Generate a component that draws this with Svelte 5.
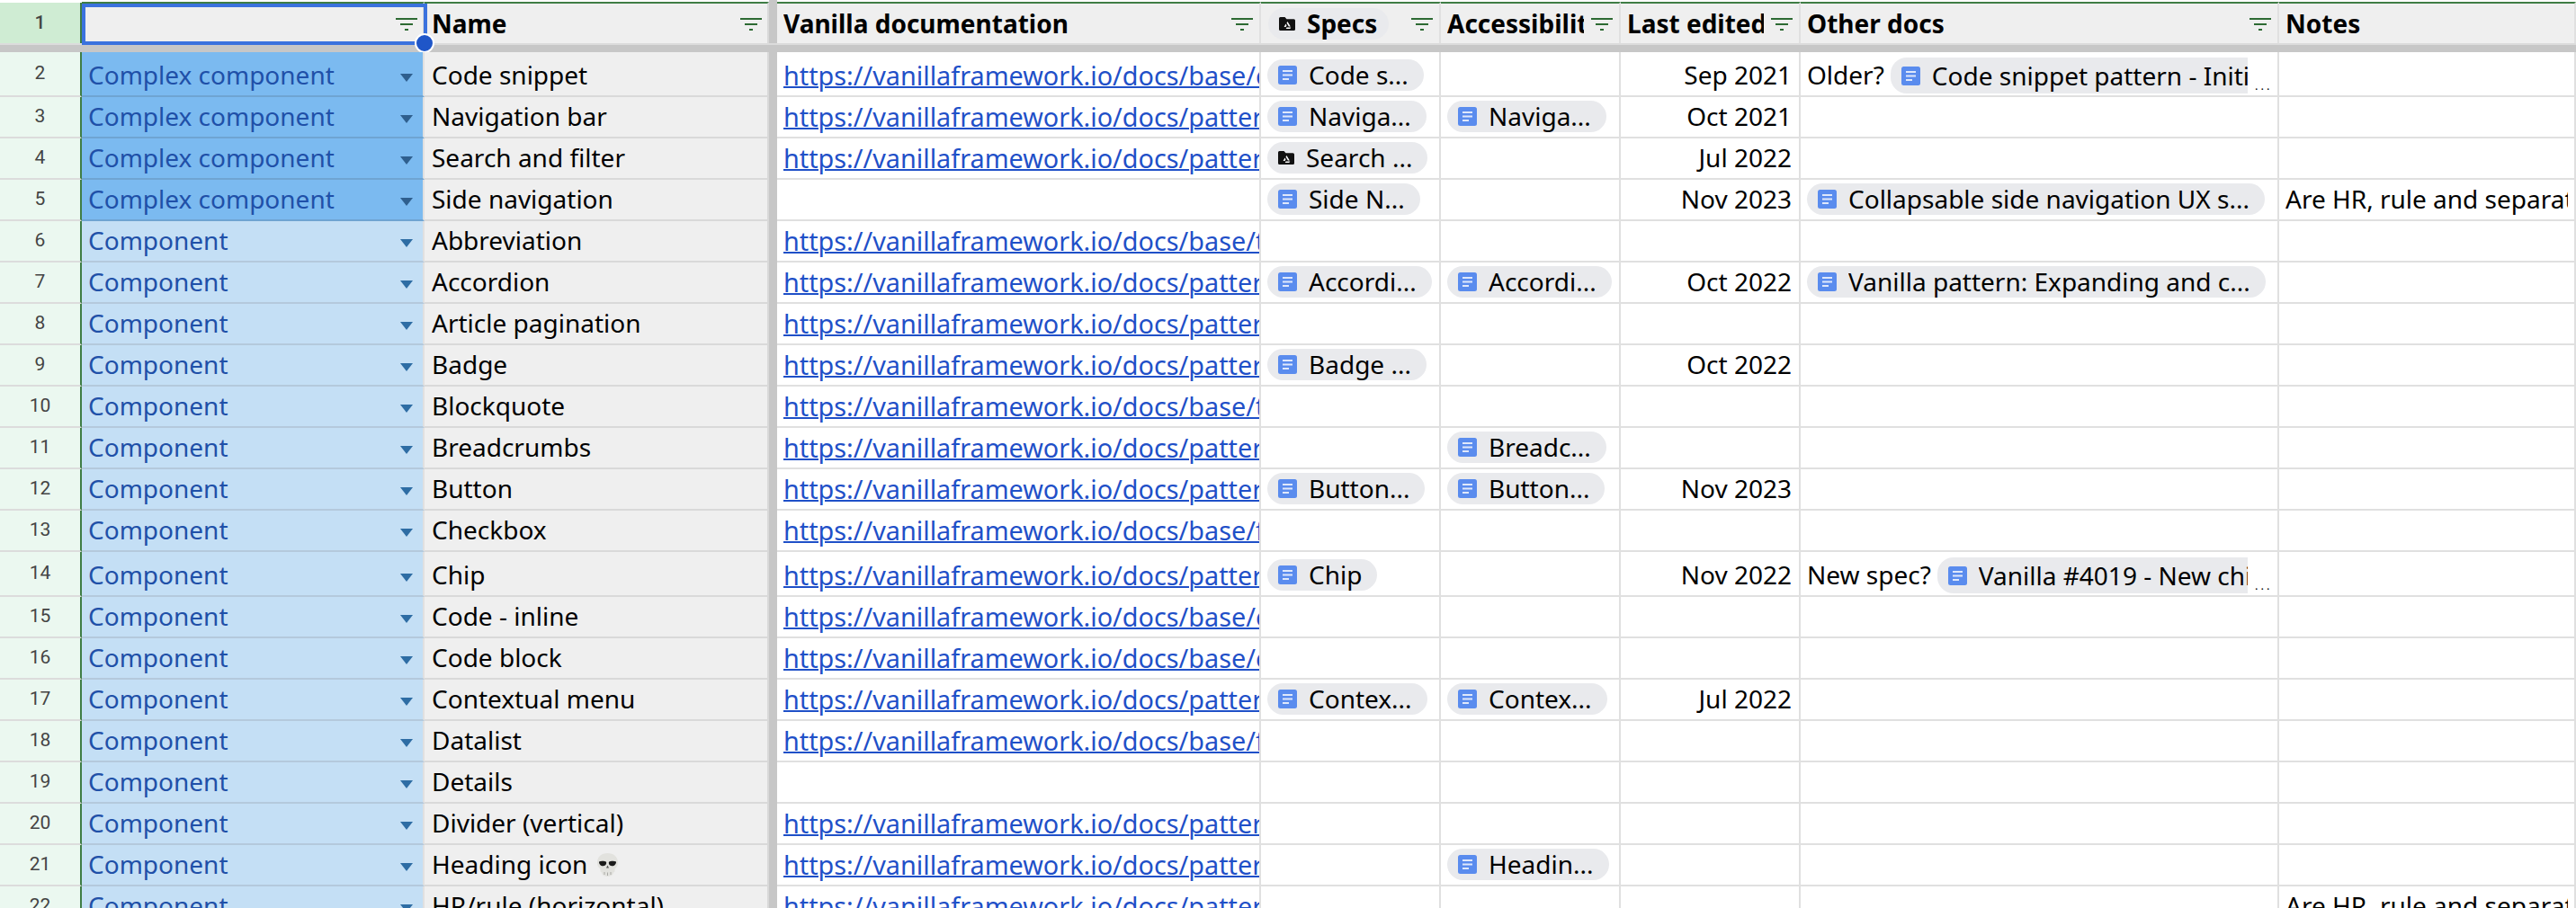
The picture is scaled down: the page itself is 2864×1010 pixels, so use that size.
<script lang="ts">
  const base = 'https://vanillaframework.io/docs/'
  const doc = (text) => ({ kind: 'doc', text })
  const folder = (text) => ({ kind: 'folder', text })

  const complex = 'Complex component'
  const comp = 'Component'

  const rows = [
    { n: 2, type: complex, name: 'Code snippet', link: 'base/code', spec: doc('Code s...'), date: 'Sep 2021', prefix: 'Older?', other: doc('Code snippet pattern - Initial spec'), cut: true, tall: true },
    { n: 3, type: complex, name: 'Navigation bar', link: 'patterns/navigation', spec: doc('Naviga...'), a11y: doc('Naviga...'), date: 'Oct 2021' },
    { n: 4, type: complex, name: 'Search and filter', link: 'patterns/search-and-filter', spec: folder('Search ...'), date: 'Jul 2022' },
    { n: 5, type: complex, name: 'Side navigation', spec: doc('Side N...'), date: 'Nov 2023', other: doc('Collapsable side navigation UX s...'), notes: 'Are HR, rule and separator the same thing?' },
    { n: 6, type: comp, name: 'Abbreviation', link: 'base/typography' },
    { n: 7, type: comp, name: 'Accordion', link: 'patterns/accordion', spec: doc('Accordi...'), a11y: doc('Accordi...'), date: 'Oct 2022', other: doc('Vanilla pattern: Expanding and c...') },
    { n: 8, type: comp, name: 'Article pagination', link: 'patterns/article-pagination' },
    { n: 9, type: comp, name: 'Badge', link: 'patterns/badge', spec: doc('Badge ...'), date: 'Oct 2022' },
    { n: 10, type: comp, name: 'Blockquote', link: 'base/typography' },
    { n: 11, type: comp, name: 'Breadcrumbs', link: 'patterns/breadcrumbs', a11y: doc('Breadc...') },
    { n: 12, type: comp, name: 'Button', link: 'patterns/buttons', spec: doc('Button...'), a11y: doc('Button...'), date: 'Nov 2023' },
    { n: 13, type: comp, name: 'Checkbox', link: 'base/forms' },
    { n: 14, type: comp, name: 'Chip', link: 'patterns/chip', spec: doc('Chip'), date: 'Nov 2022', prefix: 'New spec?', other: doc('Vanilla #4019 - New chip spec'), cut: true, tall: true },
    { n: 15, type: comp, name: 'Code - inline', link: 'base/code' },
    { n: 16, type: comp, name: 'Code block', link: 'base/code' },
    { n: 17, type: comp, name: 'Contextual menu', link: 'patterns/contextual-menu', spec: doc('Contex...'), a11y: doc('Contex...'), date: 'Jul 2022' },
    { n: 18, type: comp, name: 'Datalist', link: 'base/forms' },
    { n: 19, type: comp, name: 'Details' },
    { n: 20, type: comp, name: 'Divider (vertical)', link: 'patterns/divider' },
    { n: 21, type: comp, name: 'Heading icon', skull: true, link: 'patterns/heading-icon', a11y: doc('Headin...') },
    { n: 22, type: comp, name: 'HR/rule (horizontal)', link: 'patterns/rule', notes: 'Are HR, rule and separator the same thing?' }
  ]
</script>

{#snippet filterIcon()}
  <svg class="filter" viewBox="0 0 24 14" aria-hidden="true">
    <path d="M0 1h24M5 7h14M10 13h4" stroke="#2d6a33" stroke-width="2" fill="none" />
  </svg>
{/snippet}

{#snippet chipIcon(kind)}
  {#if kind === 'doc'}
    <svg class="icon" viewBox="0 0 21 21" aria-hidden="true">
      <rect width="21" height="21" rx="2.5" fill="#5a8cee" />
      <path d="M5 6h11M5 10.5h11M5 15h7" stroke="#dfe8fb" stroke-width="2" fill="none" />
    </svg>
  {:else}
    <svg class="icon folder" viewBox="0 0 18 15" aria-hidden="true">
      <path d="M1.5 0h5l2 2.2h8a1.5 1.5 0 0 1 1.5 1.5v9.800a1.5 1.5 0 0 1-1.500 1.500h-15a1.500 1.500 0 0 1-1.500-1.500v-12a1.500 1.500 0 0 1 1.500-1.500z" fill="#111" />
      <path d="M9.500 5l3.300 5.500h-1.900l-2.400-4zM7.500 7.600l1 1.700-1 1.700h-1.900zM8.600 11.500h4.700l-1 1.500h-4.600z" fill="#fff" />
    </svg>
  {/if}
{/snippet}

{#snippet chip(c, cut = false)}
  <span class="chip" class:cut>
    {@render chipIcon(c.kind)}
    <span class="chip-text">{c.text}</span>
  </span>
  {#if cut}<span class="more">...</span>{/if}
{/snippet}

<div class="sheet">
  <div class="row head">
    <div class="rownum first">1</div>
    <div class="cell hcell name-col active">{@render filterIcon()}</div>
    <div class="cell hcell name-col"><span class="label">Name</span>{@render filterIcon()}</div>
    <div class="freeze"></div>
    <div class="cell hcell"><span class="label">Vanilla documentation</span>{@render filterIcon()}</div>
    <div class="cell hcell">
      <span class="chip head-chip">{@render chipIcon('folder')}<span class="chip-text">Specs</span></span>
      {@render filterIcon()}
    </div>
    <div class="cell hcell"><span class="label">Accessibility</span>{@render filterIcon()}</div>
    <div class="cell hcell"><span class="label">Last edited</span>{@render filterIcon()}</div>
    <div class="cell hcell"><span class="label">Other docs</span>{@render filterIcon()}</div>
    <div class="cell hcell"><span class="label">Notes</span></div>
    <div class="selection"><span class="handle"></span></div>
  </div>
  <div class="bar"></div>

  {#each rows as r}
    <div class="row" class:tall={r.tall}>
      <div class="rownum">{r.n}</div>
      <div class="cell type" class:complex={r.type === complex}>
        <span class="label">{r.type}</span>
        <span class="arrow"></span>
      </div>
      <div class="cell name-col">
        <span class="label">{r.name}</span>
        {#if r.skull}
          <svg class="skull" viewBox="0 0 23 26" aria-hidden="true">
            <path d="M11.500 0C18 0 23 4 23 10.500c0 3.300-1.300 5.600-3.500 7V20c0 .8-.6 1.300-1.400 1.300-.2 2.800-3 4.700-6.600 4.700s-6.400-1.900-6.600-4.700C4.100 21.300 3.500 20.800 3.500 20v-2.500C1.300 16.100 0 13.800 0 10.500 0 4 5 0 11.500 0z" fill="#e2e2de" />
            <path d="M2 9.500c2-1 6-1 8 .3.600 1.900-.6 4.400-3.300 4.500-3 .1-4.900-2.400-4.700-4.800zM21 9.500c-2-1-6-1-8 .3-.6 1.900.6 4.400 3.300 4.500 3 .1 4.900-2.400 4.700-4.800z" fill="#1c1c1c" />
            <path d="M11.500 13.500l1.500 3h-3z" fill="#555" />
            <path d="M8 21v3M11.500 21.500V25M15 21v3" stroke="#a9a9a5" stroke-width="1" fill="none" />
          </svg>
        {/if}
      </div>
      <div class="freeze"></div>
      <div class="cell">
        {#if r.link}<a class="link" href={base + r.link}>{base + r.link}</a>{/if}
      </div>
      <div class="cell">{#if r.spec}{@render chip(r.spec)}{/if}</div>
      <div class="cell">{#if r.a11y}{@render chip(r.a11y)}{/if}</div>
      <div class="cell date">{r.date ?? ''}</div>
      <div class="cell">
        {#if r.prefix}<span class="prefix">{r.prefix}</span>{/if}
        {#if r.other}{@render chip(r.other, r.cut)}{/if}
      </div>
      <div class="cell"><span class="label">{r.notes ?? ''}</span></div>
    </div>
  {/each}
</div>

<style>
  :global(body) {
    margin: 0;
    background: #fff;
  }

  .sheet {
    height: 1010px;
    overflow: hidden;
    font-family: 'Noto Sans', sans-serif;
    font-size: 28px;
    color: #000;
  }

  .row {
    position: relative;
    display: grid;
    grid-template-columns: 91px 381px 383px 9px 538px 200px 200px 200px 532px 1fr;
    height: 46px;
  }

  .row.tall {
    height: 50px;
  }

  .cell {
    display: flex;
    align-items: flex-end;
    min-width: 0;
    box-sizing: border-box;
    padding: 0 7px 5px 7px;
    border-right: 2px solid #e0e0e0;
    border-bottom: 2px solid #e0e0e0;
    overflow: hidden;
    white-space: nowrap;
    line-height: 35px;
  }

  .label {
    overflow: hidden;
  }

  .rownum {
    display: flex;
    align-items: center;
    justify-content: center;
    box-sizing: border-box;
    padding-bottom: 2px;
    background: #ebf8f0;
    border-right: 2px solid #3f7d45;
    border-bottom: 2px solid #dcdcdc;
    color: #444;
    font-family: Roboto, sans-serif;
    font-size: 21px;
  }

  .rownum.first {
    margin-top: 3px;
    background: #cfecd3;
    border-bottom: 0;
    font-weight: 500;
  }

  .freeze {
    background: #c7c7c7;
  }

  .head {
    height: 48px;
  }

  .hcell {
    align-items: center;
    justify-content: space-between;
    gap: 8px;
    padding: 0 7px 0 7px;
    margin-top: 2px;
    border-top: 2px solid #3f7d45;
    border-bottom: 0;
    background: #efefef;
    font-weight: 700;
  }

  .head .label {
    flex: 1;
  }

  .bar {
    height: 10px;
    background: #c7c7c7;
    border-top: 2px solid #dcdcdc;
    box-sizing: border-box;
  }

  .filter {
    flex: none;
    width: 24px;
    height: 14px;
    margin-top: 2px;
  }

  .name-col {
    padding-left: 8px;
    background: #efefef;
    border-right-color: #d9d9d9;
    border-bottom-color: #d9d9d9;
  }

  .hcell.name-col {
    padding-right: 6px;
  }

  .active {
    justify-content: flex-end;
  }

  .type {
    justify-content: space-between;
    padding-right: 11px;
    background: #c4dff5;
    color: #1f50a8;
    border-bottom-color: #b4c9dc;
  }

  .type.complex {
    background: #7bbaf0;
    border-bottom-color: #6fa4d2;
  }

  .arrow {
    flex: none;
    width: 0;
    height: 0;
    margin: 0 0 10px 0;
    border: 7px solid transparent;
    border-top: 9px solid #2e6da4;
    border-bottom: 0;
  }

  .complex .arrow {
    border-top-color: #2f5f8e;
  }

  .link {
    color: #1f50c8;
    font-size: 28.8px;
    text-decoration: underline;
    text-decoration-thickness: 2px;
  }

  .date {
    justify-content: flex-end;
    padding-right: 8px;
  }

  .prefix {
    margin-right: 7px;
  }

  .chip {
    display: inline-flex;
    align-items: center;
    flex: none;
    box-sizing: border-box;
    height: 35px;
    padding: 0 17px 0 12px;
    gap: 13px;
    border-radius: 18px;
    background: #e9eaed;
    line-height: 35px;
  }

  .chip.cut {
    flex: 0 1 auto;
    min-width: 0;
    height: 40px;
    margin-bottom: -3px;
    padding-right: 0;
    border-radius: 18px 0 0 18px;
    overflow: hidden;
  }

  .chip-text {
    overflow: hidden;
  }

  .more {
    flex: none;
    width: 26px;
    box-sizing: border-box;
    margin-bottom: -3px;
    padding-left: 8px;
    font-size: 13px;
    letter-spacing: 3px;
    line-height: 18px;
    overflow: hidden;
  }

  .icon {
    flex: none;
    width: 21px;
    height: 21px;
  }

  .icon.folder {
    width: 18px;
    height: 15px;
  }

  .head-chip {
    margin-left: 1px;
    padding-right: 13px;
  }

  .skull {
    flex: none;
    width: 23px;
    height: 26px;
    margin: 0 0 4px 11px;
  }

  .selection {
    position: absolute;
    left: 91px;
    top: 4px;
    width: 384px;
    height: 46px;
    box-sizing: border-box;
    border: 4px solid #3b72de;
  }

  .handle {
    position: absolute;
    right: -12px;
    bottom: -13px;
    width: 18px;
    height: 18px;
    border-radius: 50%;
    background: #1f56c8;
    border: 2px solid #fff;
  }
</style>
